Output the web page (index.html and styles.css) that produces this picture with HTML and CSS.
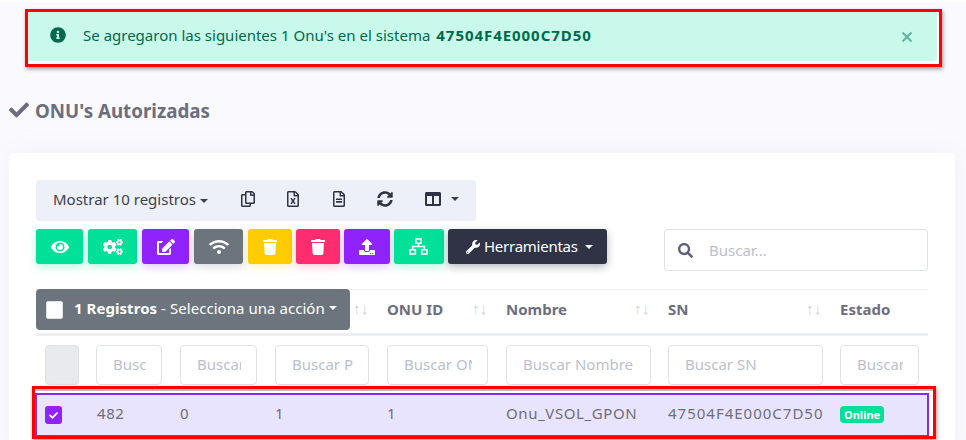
FILE: index.html
```html
<!DOCTYPE html>
<html lang="es">
<head>
<meta charset="utf-8">
<title>ONU's Autorizadas</title>
<link rel="stylesheet" href="styles.css">
</head>
<body>
<div class="topstrip"></div>
<div class="alert-mark">
  <div class="alert">
    <svg class="alert-icon" viewBox="0 0 512 512"><path d="M256 8C119.043 8 8 119.083 8 256c0 136.997 111.043 248 248 248s248-111.003 248-248C504 119.083 392.957 8 256 8zm0 110c23.196 0 42 18.804 42 42s-18.804 42-42 42-42-18.804-42-42 18.804-42 42-42zm56 254c0 6.627-5.373 12-12 12h-88c-6.627 0-12-5.373-12-12v-24c0-6.627 5.373-12 12-12h12v-64h-12c-6.627 0-12-5.373-12-12v-24c0-6.627 5.373-12 12-12h64c6.627 0 12 5.373 12 12v100h12c6.627 0 12 5.373 12 12v24z"/></svg>
    <span class="alert-text">Se agregaron las siguientes 1 Onu's en el sistema <b>47504F4E000C7D50</b></span>
    <svg class="alert-close" viewBox="0 0 12 12"><path d="M1.5 1.5l9 9M10.5 1.5l-9 9"/></svg>
  </div>
</div>
<h1 class="page-title">
  <svg viewBox="0 0 512 512"><path d="M173.898 439.404l-166.4-166.4c-9.997-9.997-9.997-26.206 0-36.204l36.203-36.204c9.997-9.998 26.207-9.998 36.204 0L192 312.69 432.095 72.596c9.997-9.997 26.207-9.997 36.204 0l36.203 36.204c9.997 9.997 9.997 26.206 0 36.204l-294.4 294.401c-9.998 9.997-26.207 9.997-36.204-.001z"/></svg>
  ONU's Autorizadas
</h1>
<main class="card">
  <div class="toolbar">
    <div class="tool tool-show">Mostrar 10 registros<i class="caret"></i></div>
    <div class="tool tool-icon t1"><svg viewBox="0 0 448 512"><path d="M433.941 65.941l-51.882-51.882A48 48 0 0 0 348.118 0H176c-26.51 0-48 21.49-48 48v48H48c-26.51 0-48 21.49-48 48v320c0 26.51 21.49 48 48 48h224c26.51 0 48-21.49 48-48v-48h80c26.51 0 48-21.49 48-48V99.882a48 48 0 0 0-14.059-33.941zM266 464H54a6 6 0 0 1-6-6V150a6 6 0 0 1 6-6h74v224c0 26.51 21.49 48 48 48h96v42a6 6 0 0 1-6 6zm128-96H182a6 6 0 0 1-6-6V54a6 6 0 0 1 6-6h106v88c0 13.255 10.745 24 24 24h88v202a6 6 0 0 1-6 6zm6-256h-64V48h9.632c1.591 0 3.117.632 4.243 1.757l48.368 48.368a6 6 0 0 1 1.757 4.243V112z"/></svg></div>
    <div class="tool tool-icon t2"><svg viewBox="0 0 384 512"><path d="M369.9 97.9L286 14C277 5 264.8-.1 252.1-.1H48C21.5 0 0 21.5 0 48v416c0 26.5 21.5 48 48 48h288c26.5 0 48-21.5 48-48V131.9c0-12.7-5.1-25-14.1-34zM332.1 128H256V51.9l76.1 76.1zM48 464V48h160v104c0 13.3 10.7 24 24 24h104v288H48zm212-240h-28.8c-4.4 0-8.4 2.4-10.5 6.3-18 33.1-22.2 42.4-28.6 57.7-13.9-29.1-6.9-17.3-28.6-57.7-2.1-3.9-6.2-6.3-10.6-6.3H124c-9.3 0-15 10-10.4 18l46.3 78-46.3 78c-4.7 8 1.1 18 10.4 18h28.9c4.4 0 8.4-2.4 10.5-6.3 21.7-40 23-45 28.6-57.7 14.9 30.2 5.9 15.9 28.6 57.7 2.1 3.9 6.2 6.3 10.6 6.3H260c9.3 0 15-10 10.4-18L224 320c.7-1.1 30.3-50.5 46.3-78 4.7-8-1.1-18-10.3-18z"/></svg></div>
    <div class="tool tool-icon t3"><svg viewBox="0 0 384 512"><path d="M288 248v28c0 6.6-5.4 12-12 12H108c-6.6 0-12-5.4-12-12v-28c0-6.6 5.4-12 12-12h168c6.6 0 12 5.4 12 12zm-12 72H108c-6.6 0-12 5.4-12 12v28c0 6.6 5.4 12 12 12h168c6.6 0 12-5.4 12-12v-28c0-6.6-5.4-12-12-12zm108-188.1V464c0 26.5-21.5 48-48 48H48c-26.5 0-48-21.5-48-48V48C0 21.5 21.5 0 48 0h204.1C264.8 0 277 5.1 286 14.1L369.9 98c9 8.9 14.1 21.2 14.1 33.9zm-128-80V128h76.1L256 51.9zM336 464V176H232c-13.3 0-24-10.7-24-24V48H48v416h288z"/></svg></div>
    <div class="tool tool-icon t4"><svg viewBox="0 0 512 512"><path d="M370.72 133.28C339.458 104.008 298.888 87.962 255.848 88c-77.458.068-144.328 53.178-162.791 126.85-1.344 5.363-6.122 9.15-11.651 9.15H24.103c-7.498 0-13.194-6.807-11.807-14.176C33.933 94.924 134.813 8 256 8c66.448 0 126.791 26.136 171.315 68.685L463.03 40.97C478.149 25.851 504 36.559 504 57.941V192c0 13.255-10.745 24-24 24H345.941c-21.382 0-32.09-25.851-16.971-40.971l41.75-41.749zM32 296h134.059c21.382 0 32.09 25.851 16.971 40.971l-41.75 41.75c31.262 29.273 71.835 45.319 114.876 45.28 77.418-.07 144.315-53.144 162.787-126.849 1.344-5.363 6.122-9.15 11.651-9.15h57.304c7.498 0 13.194 6.807 11.807 14.176C478.067 417.076 377.187 504 256 504c-66.448 0-126.791-26.136-171.315-68.685L48.97 471.03C33.851 486.149 8 475.441 8 454.059V320c0-13.255 10.745-24 24-24z"/></svg></div>
    <div class="tool tool-icon t5"><svg viewBox="0 0 512 512"><path d="M464 32H48C21.49 32 0 53.49 0 80v352c0 26.51 21.49 48 48 48h416c26.51 0 48-21.49 48-48V80c0-26.51-21.49-48-48-48zM224 416H64V160h160v256zm224 0H288V160h160v256z"/></svg><i class="caret"></i></div>
  </div>
  <div class="actions">
    <div class="btns">
      <button class="btn green b1"><svg viewBox="0 0 576 512"><path d="M572.52 241.4C518.29 135.59 410.93 64 288 64S57.68 135.64 3.48 241.41a32.35 32.35 0 0 0 0 29.19C57.71 376.41 165.07 448 288 448s230.32-71.64 284.52-177.41a32.35 32.35 0 0 0 0-29.19zM288 400a144 144 0 1 1 144-144 143.93 143.93 0 0 1-144 144zm0-240a95.31 95.31 0 0 0-25.31 3.79 47.85 47.85 0 0 1-66.9 66.9A95.78 95.78 0 1 0 288 160z"/></svg></button>
      <button class="btn green b2"><svg viewBox="0 0 640 512"><path d="M512.1 191l-8.2 14.3c-3 5.3-9.4 7.5-15.1 5.4-11.8-4.4-22.6-10.7-32.1-18.6-4.6-3.8-5.8-10.5-2.8-15.7l8.2-14.3c-6.9-8-12.3-17.3-15.9-27.4h-16.5c-6 0-11.2-4.3-12.2-10.3-2-12-2.1-24.6 0-37.1 1-6 6.2-10.4 12.2-10.4h16.5c3.6-10.1 9-19.4 15.9-27.4l-8.2-14.3c-3-5.2-1.9-11.9 2.8-15.7 9.5-7.9 20.4-14.2 32.1-18.6 5.7-2.1 12.1.1 15.1 5.4l8.2 14.3c10.5-1.9 21.2-1.9 31.7 0L552 6.3c3-5.3 9.4-7.5 15.1-5.4 11.8 4.4 22.6 10.7 32.1 18.6 4.6 3.8 5.8 10.5 2.8 15.7l-8.2 14.3c6.9 8 12.3 17.3 15.9 27.4h16.5c6 0 11.2 4.3 12.2 10.3 2 12 2.1 24.6 0 37.1-1 6-6.2 10.4-12.2 10.4h-16.5c-3.6 10.1-9 19.4-15.9 27.4l8.2 14.3c3 5.2 1.9 11.9-2.8 15.7-9.5 7.9-20.4 14.2-32.1 18.6-5.7 2.1-12.1-.1-15.1-5.4l-8.2-14.3c-10.4 1.9-21.2 1.9-31.7 0zm-10.5-58.8c38.5 29.6 82.4-14.3 52.8-52.8-38.5-29.7-82.4 14.3-52.8 52.8zM386.3 286.1l33.7 16.8c10.1 5.8 14.5 18.1 10.5 29.1-8.9 24.2-26.4 46.4-42.6 65.8-7.4 8.9-20.2 11.1-30.3 5.3l-29.1-16.8c-16 13.7-34.6 24.6-54.9 31.7v33.6c0 11.6-8.3 21.6-19.7 23.6-24.6 4.2-50.4 4.4-75.9 0-11.5-2-20-11.9-20-23.6V418c-20.3-7.2-38.9-18-54.9-31.7L74 403c-10 5.8-22.9 3.6-30.3-5.3-16.2-19.4-33.3-41.6-42.2-65.7-4-10.9.4-23.2 10.5-29.1l33.3-16.8c-3.9-20.9-3.9-42.4 0-63.4L12 205.8c-10.1-5.8-14.6-18.1-10.5-29 8.9-24.2 26-46.4 42.2-65.8 7.4-8.9 20.2-11.1 30.3-5.3l29.1 16.8c16-13.7 34.6-24.6 54.9-31.7V57.1c0-11.5 8.2-21.5 19.6-23.5 24.6-4.2 50.5-4.4 76-.1 11.5 2 20 11.9 20 23.6v33.6c20.3 7.2 38.9 18 54.9 31.7l29.1-16.8c10-5.8 22.9-3.6 30.3 5.3 16.2 19.4 33.2 41.6 42.1 65.8 4 10.9.1 23.2-10 29.1l-33.7 16.8c3.9 21 3.9 42.5 0 63.5zm-117.6 21.1c59.2-77-28.7-164.9-105.7-105.7-59.2 77 28.7 164.9 105.7 105.7zm243.4 182.7l-8.2 14.3c-3 5.3-9.4 7.5-15.1 5.4-11.8-4.4-22.6-10.7-32.1-18.6-4.6-3.8-5.8-10.5-2.8-15.7l8.2-14.3c-6.9-8-12.3-17.3-15.9-27.4h-16.5c-6 0-11.2-4.3-12.2-10.3-2-12-2.1-24.6 0-37.1 1-6 6.2-10.4 12.2-10.4h16.5c3.6-10.1 9-19.4 15.9-27.4l-8.2-14.3c-3-5.2-1.9-11.9 2.8-15.7 9.5-7.9 20.4-14.2 32.1-18.6 5.7-2.1 12.1.1 15.1 5.4l8.2 14.3c10.5-1.9 21.2-1.9 31.7 0l8.2-14.3c3-5.3 9.4-7.5 15.1-5.4 11.8 4.4 22.6 10.7 32.1 18.6 4.6 3.8 5.8 10.5 2.8 15.7l-8.2 14.3c6.9 8 12.3 17.3 15.9 27.4h16.5c6 0 11.2 4.3 12.2 10.3 2 12 2.1 24.6 0 37.1-1 6-6.2 10.4-12.2 10.4h-16.5c-3.6 10.1-9 19.4-15.9 27.4l8.2 14.3c3 5.2 1.9 11.9-2.8 15.7-9.5 7.9-20.4 14.2-32.1 18.6-5.7 2.1-12.1-.1-15.1-5.4l-8.2-14.3c-10.4 1.9-21.2 1.9-31.7 0zM501.6 431c38.5 29.6 82.4-14.3 52.8-52.8-38.5-29.6-82.4 14.3-52.8 52.8z"/></svg></button>
      <button class="btn purple b3"><svg viewBox="0 0 576 512"><path d="M402.6 83.2l90.2 90.2c3.8 3.8 3.8 10 0 13.8L274.4 405.6l-92.8 10.3c-12.4 1.4-22.9-9.1-21.5-21.5l10.3-92.8L388.8 83.2c3.8-3.8 10-3.8 13.8 0zm162-22.9l-48.8-48.8c-15.2-15.2-39.9-15.2-55.2 0l-35.4 35.4c-3.8 3.8-3.8 10 0 13.8l90.2 90.2c3.8 3.8 10 3.8 13.8 0l35.4-35.4c15.2-15.3 15.2-40 0-55.2zM384 346.2V448H64V128h73.1c3.2 0 6.2-1.3 8.5-3.5l40-40c7.6-7.6 2.2-20.5-8.5-20.5H48C21.5 64 0 85.5 0 112v352c0 26.5 21.5 48 48 48h352c26.5 0 48-21.5 48-48V306.2c0-10.7-12.9-16-20.5-8.5l-40 40c-2.2 2.3-3.5 5.3-3.5 8.5z"/></svg></button>
      <button class="btn grey b4"><svg viewBox="0 0 640 512"><path d="M634.91 154.88C457.74-8.99 182.19-8.93 5.09 154.88c-6.66 6.16-6.79 16.59-.35 22.98l34.24 33.97c6.14 6.1 16.02 6.23 22.4.38 145.92-133.68 371.3-133.71 517.25 0 6.38 5.85 16.26 5.71 22.4-.38l34.24-33.97c6.43-6.39 6.3-16.82-.36-22.98zM320 352c-35.35 0-64 28.65-64 64s28.65 64 64 64 64-28.65 64-64-28.65-64-64-64zm202.67-83.59c-115.26-101.93-290.21-101.82-405.34 0-6.9 6.1-7.12 16.69-.57 23.15l34.44 33.99c6 5.92 15.66 6.32 22.05.8 83.95-72.57 209.74-72.41 293.49 0 6.39 5.52 16.05 5.13 22.05-.8l34.44-33.99c6.56-6.46 6.33-17.06-.56-23.15z"/></svg></button>
      <button class="btn yellow b5"><svg viewBox="0 0 448 512"><path d="M432 32H312l-9.4-18.7A24 24 0 0 0 281.1 0H166.8a23.72 23.72 0 0 0-21.4 13.3L136 32H16A16 16 0 0 0 0 48v32a16 16 0 0 0 16 16h416a16 16 0 0 0 16-16V48a16 16 0 0 0-16-16zM53.2 467a48 48 0 0 0 47.9 45h245.8a48 48 0 0 0 47.9-45L416 128H32z"/></svg></button>
      <button class="btn pink b5"><svg viewBox="0 0 448 512"><path d="M432 32H312l-9.4-18.7A24 24 0 0 0 281.1 0H166.8a23.72 23.72 0 0 0-21.4 13.3L136 32H16A16 16 0 0 0 0 48v32a16 16 0 0 0 16 16h416a16 16 0 0 0 16-16V48a16 16 0 0 0-16-16zM53.2 467a48 48 0 0 0 47.9 45h245.8a48 48 0 0 0 47.9-45L416 128H32z"/></svg></button>
      <button class="btn purple b6"><svg viewBox="0 0 512 512"><path d="M296 384h-80c-13.3 0-24-10.7-24-24V192h-87.7c-17.8 0-26.7-21.5-14.1-34.1L242.3 5.7c7.5-7.5 19.8-7.5 27.3 0l152.2 152.2c12.6 12.6 3.7 34.1-14.1 34.1H320v168c0 13.3-10.7 24-24 24zm216-8v112c0 13.3-10.7 24-24 24H24c-13.3 0-24-10.7-24-24V376c0-13.3 10.7-24 24-24h136v8c0 30.9 25.1 56 56 56h80c30.9 0 56-25.1 56-56v-8h136c13.3 0 24 10.7 24 24zm-124 88c0-11-9-20-20-20s-20 9-20 20 9 20 20 20 20-9 20-20zm64 0c0-11-9-20-20-20s-20 9-20 20 9 20 20 20 20-9 20-20z"/></svg></button>
      <button class="btn green b7"><svg class="net" viewBox="0 0 18 16"><path d="M6.5 1h5v4h-5zM1 11h5v4H1zM12 11h5v4h-5zM9 5v3M3.5 11V8h11v3"/></svg></button>
      <button class="btn dark b8"><svg viewBox="0 0 512 512"><path d="M507.73 109.1c-2.24-9.03-13.54-12.09-20.12-5.51l-74.36 74.36-67.88-11.31-11.31-67.88 74.36-74.36c6.62-6.62 3.43-17.9-5.66-20.16-47.38-11.74-99.55.91-136.58 37.93-39.64 39.64-50.55 97.1-34.05 147.2L18.74 402.76c-24.99 24.99-24.99 65.51 0 90.5 24.99 24.99 65.51 24.99 90.5 0l213.21-213.21c50.12 16.71 107.47 5.68 147.37-34.22 37.07-37.07 49.7-89.32 37.91-136.73zM64 472c-13.25 0-24-10.75-24-24 0-13.26 10.75-24 24-24s24 10.74 24 24c0 13.25-10.75 24-24 24z"/></svg><span class="b8-text">Herramientas</span><i class="caret"></i></button>
    </div>
    <label class="search">
      <svg viewBox="0 0 512 512"><path d="M505 442.7L405.3 343c-4.5-4.5-10.6-7-17-7H372c27.6-35.3 44-79.7 44-128C416 93.1 322.9 0 208 0S0 93.1 0 208s93.1 208 208 208c48.3 0 92.7-16.4 128-44v16.3c0 6.4 2.5 12.5 7 17l99.7 99.7c9.4 9.4 24.6 9.4 33.9 0l28.3-28.3c9.4-9.4 9.4-24.6.1-34zM208 336c-70.7 0-128-57.2-128-128 0-70.7 57.2-128 128-128 70.7 0 128 57.2 128 128 0 70.7-57.2 128-128 128z"/></svg>
      <input type="text" placeholder="Buscar...">
    </label>
  </div>
  <div class="table-wrap">
    <table>
      <colgroup><col class="c1"><col class="c2"><col class="c3"><col class="c4"><col class="c5"><col class="c6"><col class="c7"><col class="c8"></colgroup>
      <thead>
        <tr class="head">
          <th></th><th></th><th></th>
          <th><span class="sort">↑↓</span></th>
          <th>ONU ID<span class="sort">↑↓</span></th>
          <th>Nombre<span class="sort">↑↓</span></th>
          <th>SN<span class="sort">↑↓</span></th>
          <th>Estado</th>
        </tr>
        <tr class="filters">
          <td><div class="fake-check"></div></td>
          <td><input type="text" placeholder="Buscar"></td>
          <td><input type="text" placeholder="Buscar"></td>
          <td><input type="text" placeholder="Buscar PON"></td>
          <td><input type="text" placeholder="Buscar ONU"></td>
          <td class="tight"><input type="text" placeholder="Buscar Nombre"></td>
          <td class="tight"><input type="text" placeholder="Buscar SN"></td>
          <td><input type="text" placeholder="Buscar"></td>
        </tr>
      </thead>
      <tbody>
        <tr class="selected">
          <td class="check-cell"><span class="check"><svg viewBox="0 0 512 512"><path d="M173.898 439.404l-166.4-166.4c-9.997-9.997-9.997-26.206 0-36.204l36.203-36.204c9.997-9.998 26.207-9.998 36.204 0L192 312.69 432.095 72.596c9.997-9.997 26.207-9.997 36.204 0l36.203 36.204c9.997 9.997 9.997 26.206 0 36.204l-294.4 294.401c-9.998 9.997-26.207 9.997-36.204-.001z"/></svg></span></td>
          <td class="first-data">482</td><td>0</td><td>1</td><td>1</td><td>Onu_VSOL_GPON</td><td class="sn">47504F4E000C7D50</td>
          <td><span class="badge">Online</span></td>
        </tr>
      </tbody>
    </table>
    <div class="selbar"><span class="selbox"></span><span class="seltext"><b>1 Registros</b> - Selecciona una acción</span><i class="caret"></i></div>
    <div class="row-mark"></div>
  </div>
</main>
</body>
</html>
```

FILE: styles.css
```css
* { box-sizing: border-box; }
html, body { height: 440px; overflow: hidden; }
body {
  margin: 0;
  background: #f9f9fe;
  font-family: "Noto Sans", "Open Sans", sans-serif;
  font-size: 15px;
  color: #6c6e7e;
}
.topstrip { height: 2px; background: #fff; }
.alert-mark {
  margin: 7px 24px 0 25px;
  height: 58px;
  border: 3px solid #f00;
  box-shadow: 1px 2px 4px rgba(0,0,0,.4);
}
.alert {
  height: 49px;
  margin-right: 2px;
  background: #c8f9ea;
  border-radius: 0 0 4px 0;
  display: flex;
  align-items: center;
  color: #00694c;
  padding: 0 24px 0 22px;
}
.alert-icon { width: 16px; height: 16px; fill: #00694c; margin-top: -3px; }
.alert-text { margin-left: 17px; margin-top: -3px; flex: 1; letter-spacing: -.01px; word-spacing: .1px; }
.alert-text b { font-weight: 700; letter-spacing: .95px; margin-left: 2px; }
.alert-close { width: 12px; height: 12px; fill: none; stroke: #5fb59c; stroke-width: 2; }
.page-title {
  margin: 31px 0 0 9px;
  height: 24px;
  display: flex;
  align-items: center;
  gap: 6px;
  font-size: 18.75px;
  font-weight: 700;
  color: #6c6e7e;
}
.page-title svg { width: 20px; height: 20px; fill: #6c6e7e; }
.card {
  margin: 31px 11px 0 9px;
  height: 300px;
  background: #fff;
  border-radius: 5px;
  padding: 27px;
  box-shadow: 0 0 30px rgba(40,40,90,.04);
}
.toolbar {
  width: 440px;
  height: 41px;
  padding-bottom: 3px;
  background: #edf0f8;
  border-radius: 3px;
  display: flex;
  align-items: center;
  color: #3d3f4e;
}
.tool-show { padding-left: 17px; width: 192px; white-space: nowrap; }
.caret {
  display: inline-block;
  border-top: 4px solid currentColor;
  border-left: 4px solid transparent;
  border-right: 4px solid transparent;
  margin-left: 4px;
  vertical-align: 2px;
}
.tool-icon { display: flex; align-items: center; }
.tool-icon svg { height: 16px; fill: #2f3345; }
.t1 { width: 46px; padding-left: 13px; }
.t2 { width: 45px; padding-left: 13px; }
.t3 { width: 44px; padding-left: 14px; }
.t4 { width: 49px; padding-left: 14px; }
.t5 { flex: 1; padding-left: 13px; }
.t5 .caret { margin-left: 10px; }
.actions {
  display: flex;
  justify-content: space-between;
  align-items: flex-start;
  margin-top: 8px;
}
.btns { display: flex; gap: 4px; height: 35px; }
.btn {
  height: 35px;
  border: 0;
  border-radius: 3px;
  color: #fff;
  font: inherit;
  padding: 0;
  display: flex;
  align-items: center;
  justify-content: center;
}
.btn svg { height: 16px; fill: #fff; }
.btn .net { fill: none; stroke: #fff; stroke-width: 1.5; height: 17px; }
.green { background: #00e097; box-shadow: 0 3px 8px rgba(0,224,151,.3); }
.purple { background: #9022fb; box-shadow: 0 3px 8px rgba(144,34,251,.25); }
.grey { background: #6c757d; box-shadow: 0 3px 8px rgba(108,117,125,.25); }
.yellow { background: #ffcc00; box-shadow: 0 3px 8px rgba(255,204,0,.25); }
.pink { background: #ff2d6f; box-shadow: 0 3px 8px rgba(255,45,111,.25); }
.dark { background: #2f3345; box-shadow: 0 3px 8px rgba(47,51,69,.35); gap: 4px; justify-content: flex-start; padding-left: 18px; }
.dark svg { height: 14px; }
.dark .caret { margin-left: 3px; }
.b8-text { letter-spacing: -.25px; margin-top: -2px; }
.b1 { width: 47px; margin-right: 1px; }
.b2 { width: 49px; margin-right: 1px; }
.b3 { width: 47px; margin-right: 1px; }
.b4 { width: 49px; margin-right: 1px; }
.b5 { width: 44px; }
.b6 { width: 46px; }
.b7 { width: 50px; }
.b8 { width: 159px; }
.search {
  width: 264px;
  height: 42px;
  border: 1px solid #e0e2ea;
  border-radius: 3px;
  display: flex;
  align-items: center;
  padding-left: 13px;
}
.search svg { width: 15px; height: 15px; fill: #5e6276; }
.search input {
  border: 0;
  outline: 0;
  font: inherit;
  margin-left: 15px;
  padding: 0 0 0 1px;
  flex: 1;
  min-width: 0;
  background: none;
}
input::placeholder { color: #bcbfcc; opacity: 1; }
.table-wrap { position: relative; margin-top: 18px; }
table {
  width: 892px;
  table-layout: fixed;
  border-collapse: collapse;
}
.c1 { width: 51px; } .c2 { width: 84px; } .c3 { width: 95px; } .c4 { width: 112px; }
.c5 { width: 119px; } .c6 { width: 162px; } .c7 { width: 172px; } .c8 { width: 97px; }
.head th {
  height: 45px;
  border-top: 1px solid #edeff5;
  border-bottom: 3px solid #edeff5;
  text-align: left;
  padding: 0 9px 6px;
  font-weight: 700;
  color: #6c6e7e;
  position: relative;
  white-space: nowrap;
}
.sort {
  position: absolute;
  right: 9px;
  top: 8px;
  font-weight: 400;
  font-size: 15px;
  letter-spacing: .5px;
  color: #ccd0db;
}
.filters td { padding: 9px; height: 58px; }
.filters .tight { padding-right: 8px; }
.filters input {
  display: block;
  width: 100%;
  height: 40px;
  border: 1px solid #e0e2ea;
  border-radius: 4px;
  padding: 0 15px 3px 16px;
  font: inherit;
  outline: 0;
  background: #fff;
}
.fake-check { width: 34px; height: 40px; background: #e9eaee; border: 1px solid #e0e2ea; border-radius: 4px; }
.selected td { height: 42px; padding: 0 9px 4px; background: #e9e4fd; white-space: nowrap; letter-spacing: .6px; }
.selected .check-cell { padding-bottom: 0; }
.selected .first-data { padding-left: 10px; }
.selected .sn { letter-spacing: 1px; }
.check {
  width: 17px; height: 18px;
  background: #9022fb;
  border-radius: 3px;
  display: flex;
  align-items: center;
  justify-content: center;
}
.check svg { width: 9px; height: 9px; fill: #fff; }
.badge {
  display: inline-block;
  background: #00e097;
  color: #fff;
  font-size: 11px;
  font-weight: 700;
  line-height: 17px;
  padding: 0 4px;
  border-radius: 4px;
  letter-spacing: 0;
}
.selbar {
  position: absolute;
  left: 0; top: 0;
  width: 314px;
  height: 41px;
  background: #6c757d;
  border-radius: 4px;
  display: flex;
  align-items: center;
  color: #fff;
  padding-left: 10px;
}
.selbox { width: 17px; height: 18px; background: #fff; border-radius: 2px; border: 1px solid #dcdfe6; }
.seltext { margin-left: 11px; margin-top: -4px; white-space: nowrap; letter-spacing: .05px; }
.selbar .caret { margin-top: -3px; }
.row-mark {
  position: absolute;
  left: -4px;
  top: 97px;
  width: 904px;
  height: 53px;
  border: 3px solid #f00;
  box-shadow: inset 0 2px 0 #bbb, 1px 2px 4px rgba(0,0,0,.4);
}
.selected { outline: 2px solid #8a2be2; outline-offset: -1px; }
```
